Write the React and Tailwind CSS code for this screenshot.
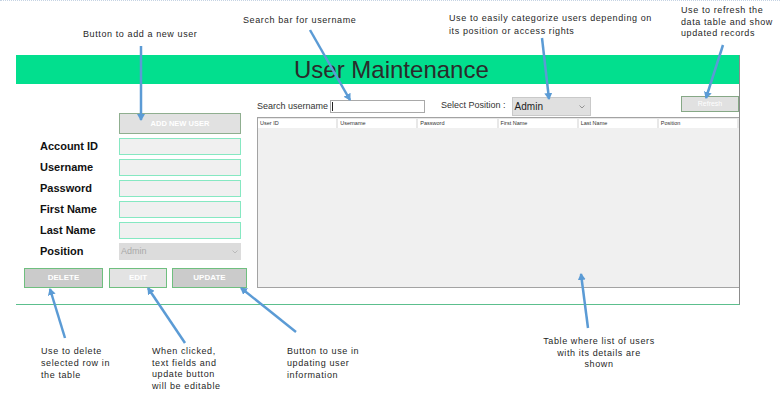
import React from "react";

const arrows = [
  // [x1, y1, x2, y2] tail -> tip
  [141, 45, 141, 119],
  [310, 29, 350, 99],
  [542, 37, 549, 98],
  [723, 44, 706, 97],
  [65, 337, 50, 288],
  [185, 342, 148, 287],
  [296, 331, 241, 287],
  [588, 327, 581, 273],
];

function Notes() {
  return (
    <div className="pointer-events-none absolute inset-0 font-['Liberation_Sans',Arial,sans-serif] text-[9px] tracking-[0.6px] text-[#1f1f1f]">
      <p className="absolute left-[83px] top-[27px] leading-[12px]">Button to add a new user</p>
      <p className="absolute left-[243px] top-[13px] leading-[12px]">Search bar for username</p>
      <p className="absolute left-[449px] top-[11px] leading-[13px]">
        Use to easily categorize users depending on
        <br />
        its position or access rights
      </p>
      <p className="absolute left-[681px] top-[4px] leading-[11.7px]">
        Use to refresh the
        <br />
        data table and show
        <br />
        updated records
      </p>
      <p className="absolute left-[41px] top-[344px] leading-[12px]">
        Use to delete
        <br />
        selected row in
        <br />
        the table
      </p>
      <p className="absolute left-[152px] top-[345px] leading-[11.7px]">
        When clicked,
        <br />
        text fields and
        <br />
        update button
        <br />
        will be editable
      </p>
      <p className="absolute left-[287px] top-[344px] leading-[12px]">
        Button to use in
        <br />
        updating user
        <br />
        information
      </p>
      <p className="absolute left-[529px] top-[335px] w-[140px] text-center leading-[11.5px]">
        Table where list of users
        <br />
        with its details are
        <br />
        shown
      </p>

      {/* callout arrows */}
      <svg className="absolute inset-0" width="780" height="400" viewBox="0 0 780 400">
        <defs>
          <marker id="ah" markerUnits="userSpaceOnUse" markerWidth="8" markerHeight="8" refX="6" refY="4" orient="auto">
            <path d="M0 0 L7 4 L0 8 Z" fill="#5b9bd5" />
          </marker>
        </defs>
        {arrows.map(([x1, y1, x2, y2], i) => (
          <line key={i} x1={x1} y1={y1} x2={x2} y2={y2} stroke="#5b9bd5" strokeWidth="2.5" markerEnd="url(#ah)" />
        ))}
      </svg>
    </div>
  );
}

function Chevron({ color = "#8a8a8a" }) {
  return (
    <svg width="6" height="4" viewBox="0 0 6 4" className="shrink-0">
      <path d="M0.5 0.5 L3 3 L5.5 0.5" fill="none" stroke={color} strokeWidth="0.9" />
    </svg>
  );
}

const fields = ["Account ID", "Username", "Password", "First Name", "Last Name"];
const columns = ["User ID", "Username", "Password", "First Name", "Last Name", "Position"];

export default function App() {
  return (
    <div className="relative h-[400px] w-[780px] overflow-hidden border-t border-dotted border-[#c5d3e3] bg-white font-['Liberation_Sans',Arial,sans-serif]">
      <div className="pl-[16px] pt-[51px]">
        <div className="h-[250px] w-[724px] border-r border-b border-r-[#8c8c8c] border-b-[#5cbf8d]">
          {/* header */}
          <div className="mt-[3px] h-[29px] bg-[#02df8e] pl-[278px] text-[24px] leading-[29px] text-[#2b2b2b]">
            User Maintenance
          </div>

          <div className="flex h-[217px]">
            {/* left form */}
            <div className="flex w-[241px] flex-col">
              <button className="ml-[103px] mt-[29px] h-[21px] w-[122px] border border-[#8fae8f] bg-[#e1e1e1] text-[7.5px] font-bold text-white">
                ADD NEW USER
              </button>
              <div className="mt-[4px] flex flex-col gap-[4px] pl-[24px]">
                {fields.map((f) => (
                  <div key={f} className="flex h-[17px] items-center">
                    <span className="w-[79px] text-[11px] font-bold text-[#111]">{f}</span>
                    <div className="h-[17px] w-[122px] border border-[#86e8c2] bg-[#f0f0f0]" />
                  </div>
                ))}
                <div className="flex h-[17px] items-center">
                  <span className="w-[79px] text-[11px] font-bold text-[#111]">Position</span>
                  <div className="flex h-[17px] w-[122px] items-center justify-between bg-[#dcdcdc] pl-[2px] pr-[3px] text-[9px] text-[#a9a9a9]">
                    Admin
                    <Chevron color="#b5b5b5" />
                  </div>
                </div>
              </div>
              <div className="ml-[8px] mt-[8px] flex h-[20px] text-[8px] font-bold text-white">
                <button className="w-[79px] border border-[#6fbf7f] bg-[#cbcbcb]">DELETE</button>
                <button className="ml-[6px] w-[58px] border border-[#6fbf7f] bg-[#e3e3e3]">EDIT</button>
                <button className="ml-[5px] w-[75px] border border-[#6fbf7f] bg-[#cbcbcb]">UPDATE</button>
              </div>
            </div>

            {/* right side: search + table */}
            <div className="flex w-[482px] flex-col pt-[12px]">
              <div className="flex h-[21px] items-start text-[9px] text-[#333]">
                <span className="mt-[3px] leading-[14px]">Search username</span>
                <div className="ml-[2px] mt-[4px] flex h-[13px] w-[95px] items-center border border-[#a9a9a9] bg-white pl-[1px]">
                  <span className="h-[9px] w-px bg-[#222]" />
                </div>
                <span className="ml-[16px] mt-[2px] leading-[14px]">Select Position :</span>
                <div className="ml-[6px] mt-[1px] flex h-[19px] w-[79px] items-center justify-between border border-[#c9c9c9] bg-[#e0e0e0] pl-[2px] pr-[5px] text-[10px] text-[#1e1e1e]">
                  Admin
                  <Chevron />
                </div>
                <button className="ml-auto h-[16px] w-[58px] border border-[#86a886] bg-[#e1e1e1] text-[7px] text-white">
                  Refresh
                </button>
              </div>

              <div className="flex h-[171px] flex-col border border-r-0 border-[#a3a3a3] bg-[#f0f0f0]">
                <div className="flex h-[10px] bg-[#e8e8e8] pt-px">
                  {columns.map((c) => (
                    <div key={c} className="mr-[2px] h-[9px] w-[79px] bg-white pl-[2px] text-[5.5px] leading-[9px] text-[#333]">
                      {c}
                    </div>
                  ))}
                </div>
              </div>
            </div>
          </div>
        </div>
      </div>

      <Notes />
    </div>
  );
}
